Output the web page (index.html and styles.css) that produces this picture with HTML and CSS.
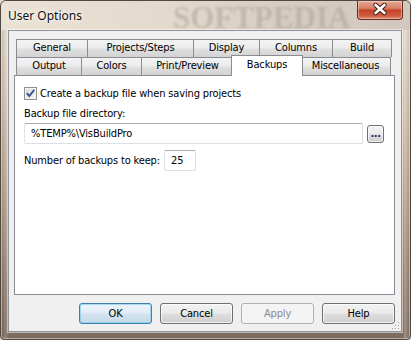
FILE: index.html
```html
<!DOCTYPE html>
<html>
<head>
<meta charset="utf-8">
<link rel="stylesheet" href="styles.css">
</head>
<body>
<div class="window">
  <div class="titlebar">
    <span class="title">User Options</span>
    <span class="watermark">SOFTPEDIA</span>
    <div class="close">
      <svg width="46" height="19" viewBox="0 0 46 19">
        <path d="M18.5 5 L27.5 13 M27.5 5 L18.5 13" stroke="#3b1a14" stroke-width="4.4" stroke-linecap="round"/>
        <path d="M18.5 5 L27.5 13 M27.5 5 L18.5 13" stroke="#ffffff" stroke-width="2.6" stroke-linecap="round"/>
      </svg>
    </div>
  </div>
  <div class="client">
    <div class="tabctl">
      <div class="tabrow">
        <div class="tab w-general">General</div>
        <div class="tab w-projects">Projects/Steps</div>
        <div class="tab w-display">Display</div>
        <div class="tab w-columns">Columns</div>
        <div class="tab w-build">Build</div>
      </div>
      <div class="tabrow">
        <div class="tab w-output">Output</div>
        <div class="tab w-colors">Colors</div>
        <div class="tab w-print">Print/Preview</div>
        <div class="tab selected">Backups</div>
        <div class="tab w-misc">Miscellaneous</div>
      </div>
      <div class="panel">
        <label class="checkrow">
          <span class="checkbox">
            <svg width="11" height="11" viewBox="0 0 11 11"><path d="M1.8 5.2 L4.3 8 L9.2 1.8" fill="none" stroke="#3b4f8a" stroke-width="1.9"/></svg>
          </span>
          <span>Create a backup file when saving projects</span>
        </label>
        <div class="label">Backup file directory:</div>
        <div class="dirrow">
          <div class="edit dir">%TEMP%\VisBuildPro</div>
          <div class="browse">...</div>
        </div>
        <div class="numrow">
          <span class="numlabel">Number of backups to keep:</span>
          <div class="edit num">25</div>
        </div>
      </div>
    </div>
    <div class="buttons">
      <div class="btn default">OK</div>
      <div class="btn">Cancel</div>
      <div class="btn disabled">Apply</div>
      <div class="btn">Help</div>
    </div>
    <svg class="grip" width="8" height="8" viewBox="0 0 8 8">
      <rect x="6" y="0" width="1" height="1" fill="#a0a0a0"/>
      <rect x="3" y="3" width="1" height="1" fill="#a0a0a0"/>
      <rect x="6" y="3" width="1" height="1" fill="#a0a0a0"/>
      <rect x="0" y="6" width="1" height="1" fill="#a0a0a0"/>
      <rect x="3" y="6" width="1" height="1" fill="#a0a0a0"/>
      <rect x="6" y="6" width="1" height="1" fill="#a0a0a0"/>
    </svg>
  </div>
</div>
</body>
</html>
```
FILE: styles.css
```css
html, body {
  margin: 0;
  padding: 0;
}
body {
  width: 411px;
  height: 340px;
  overflow: hidden;
  background: #e4dbd0;
  font-family: "DejaVu Sans Condensed", "Liberation Sans", sans-serif;
  font-size: 11px;
  letter-spacing: -0.15px;
  color: #000;
}
.window {
  box-sizing: border-box;
  width: 411px;
  height: 340px;
  border: 1px solid #4f4740;
  border-radius: 6px 6px 4px 4px;
  padding: 0 8px 7px 7px;
  display: flex;
  flex-direction: column;
  background:
    linear-gradient(to right, rgba(0,0,0,0.12) 0, rgba(255,255,255,0.15) 5px, rgba(255,255,255,0) 8px, rgba(255,255,255,0) 402px, rgba(255,255,255,0.25) 404px, rgba(0,0,0,0.1) 409px),
    linear-gradient(to bottom, #e6dccf 0%, #d6c6b4 25%, #b8a08c 55%, #96806f 80%, #7c6a5d 100%);
  box-shadow: inset 0 0 0 1px rgba(255,255,255,0.45);
  position: relative;
  overflow: hidden;
}
.titlebar {
  height: 29px;
  flex: none;
  display: flex;
  align-items: flex-start;
  margin: 0 -8px 0 -7px;
  padding: 0 7px 0 7px;
  background: linear-gradient(to right, #ebe2d6 0%, #e3d9cc 40%, #d6ccc2 70%, #d2c8be 100%);
  border-radius: 5px 5px 0 0;
  position: relative;
}
.title {
  font-family: "Noto Sans", "Open Sans", sans-serif;
  font-size: 12px;
  letter-spacing: 0;
  margin-top: 6px;
  color: #111;
  text-shadow: 0 0 6px #fff, 0 0 3px #fff;
}
.watermark {
  position: absolute;
  left: 172px;
  top: -1px;
  font-family: "Liberation Serif", serif;
  font-weight: bold;
  font-size: 31px;
  letter-spacing: 0;
  color: rgba(170,160,150,0.5);
  filter: blur(1.3px);
}
.close {
  margin-left: auto;
  width: 46px;
  height: 19px;
  box-sizing: border-box;
  border: 1px solid #5e2a22;
  border-top: none;
  border-radius: 0 0 4px 4px;
  background: linear-gradient(to bottom, #e6a897 0%, #d98068 40%, #c4432c 52%, #cf5a3e 80%, #e08a6c 100%);
  box-shadow: inset 0 0 0 1px rgba(255,220,210,0.5);
  position: relative;
  z-index: 1;
}
.close svg {
  display: block;
  margin: -1px 0 0 -1px;
}
.client {
  box-sizing: border-box;
  width: 394px;
  height: 302px;
  border: 1px solid #8d939b;
  background: #f0f0f0;
  box-shadow: 0 0 0 1px rgba(255,255,255,0.5);
  padding: 8px 6px 0 5px;
  display: flex;
  flex-direction: column;
  position: relative;
}
.tabctl {
  display: flex;
  flex-direction: column;
}
.tabrow {
  display: flex;
  margin: 0 4px 0 2px;
  height: 18px;
}
.tab {
  box-sizing: border-box;
  height: 18px;
  border: 1px solid #898c95;
  border-bottom: none;
  margin-left: -1px;
  background: linear-gradient(to bottom, #f3f3f3 0%, #ececec 45%, #dfdfdf 55%, #d3d3d3 100%);
  text-align: center;
  line-height: 16px;
  white-space: nowrap;
  flex: none;
}
.tab:first-child { margin-left: 0; }
.w-general { width: 72px; }
.w-projects { width: 107px; }
.w-display { width: 67px; }
.w-columns { width: 74px; }
.w-build { width: 60px; }
.w-output { width: 66px; }
.w-colors { width: 61px; }
.w-print { width: 93px; }
.w-misc { width: 91px; margin-left: -2px; }
.tab.selected {
  width: 72px;
  height: 21px;
  margin: -2px -1px 0 -3px;
  background: #fff;
  position: relative;
  z-index: 2;
  line-height: 18px;
}
.panel {
  box-sizing: border-box;
  height: 220px;
  border: 1px solid #898c95;
  background: #fff;
  padding: 11px 0 0 9px;
  display: flex;
  flex-direction: column;
  align-items: flex-start;
}
.checkrow {
  display: flex;
  align-items: center;
  height: 13px;
  gap: 3px;
}
.checkbox {
  box-sizing: border-box;
  width: 13px;
  height: 13px;
  border: 1px solid #8e8f8f;
  background: linear-gradient(135deg, #dcdcdc 0%, #f6f6f6 100%);
  box-shadow: inset 0 0 0 1px #f4f4f4;
  display: flex;
  align-items: center;
  justify-content: center;
}
.checkbox svg { display: block; }
.label {
  margin-top: 7px;
  height: 13px;
  line-height: 13px;
}
.dirrow {
  margin-top: 3px;
  display: flex;
  align-items: center;
  gap: 4px;
}
.edit {
  box-sizing: border-box;
  height: 21px;
  border: 1px solid #dbdfe6;
  border-top-color: #abadb3;
  border-left-color: #e2e3ea;
  border-radius: 2px;
  background: #fff;
  line-height: 19px;
  padding-left: 6px;
}
.edit.dir { width: 339px; }
.browse {
  box-sizing: border-box;
  width: 17px;
  height: 18px;
  border: 1px solid #707070;
  border-radius: 3px;
  background: linear-gradient(to bottom, #f2f2f2 0%, #ebebeb 45%, #dddddd 55%, #cfcfcf 100%);
  box-shadow: inset 0 0 0 1px rgba(255,255,255,0.7);
  color: #1f2a6e;
  font-weight: bold;
  text-align: center;
  line-height: 16px;
  letter-spacing: -0.5px;
}
.numrow {
  margin-top: 6px;
  display: flex;
  align-items: center;
}
.numlabel {
  width: 140px;
}
.edit.num {
  width: 32px;
}
.buttons {
  margin-top: 8px;
  display: flex;
  justify-content: flex-end;
  gap: 8px;
}
.btn {
  box-sizing: border-box;
  width: 73px;
  height: 21px;
  border: 1px solid #707070;
  border-radius: 3px;
  background: linear-gradient(to bottom, #f2f2f2 0%, #ebebeb 45%, #dddddd 55%, #cfcfcf 100%);
  box-shadow: inset 0 0 0 1px rgba(255,255,255,0.7);
  text-align: center;
  line-height: 19px;
}
.btn.default {
  border-color: #3c7fb1;
  background: linear-gradient(to bottom, #edf5fb 0%, #e1ecf5 45%, #d2e2ee 55%, #c8dae8 100%);
  box-shadow: inset 0 0 0 1px rgba(120,200,240,0.6);
}
.btn.disabled {
  border-color: #adb2b5;
  background: #f4f4f4;
  box-shadow: none;
  color: #8a8a8a;
}
.grip {
  position: absolute;
  right: 1px;
  bottom: 1px;
}
```
